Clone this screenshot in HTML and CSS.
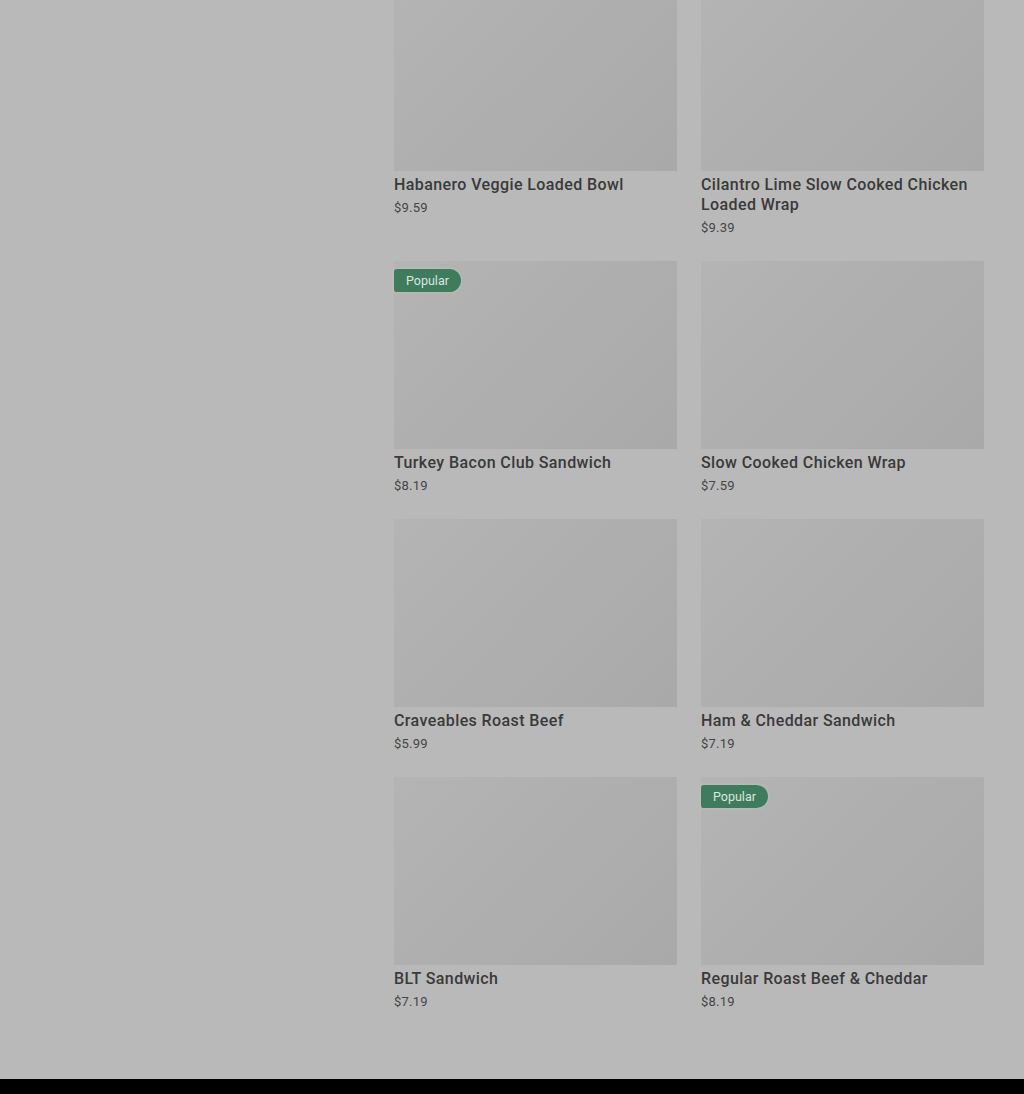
FILE: index.html
```html
<!DOCTYPE html>
<html lang="en">
<head>
    <meta charset="UTF-8">
    <meta name="viewport" content="width=device-width, initial-scale=1.0">
    <title>Menu</title>
    <link rel="stylesheet" href="styles.css">
</head>
<body>

    <div class="page">
        <aside class="sidebar"></aside>

        <main class="menu-grid">
            <div class="item">
                <div class="item-img"></div>
                <h3 class="item-name">Habanero Veggie Loaded Bowl</h3>
                <p class="item-price">$9.59</p>
            </div>
            <div class="item">
                <div class="item-img"></div>
                <h3 class="item-name">Cilantro Lime Slow Cooked Chicken Loaded Wrap</h3>
                <p class="item-price">$9.39</p>
            </div>

            <div class="item">
                <div class="item-img"><span class="badge">Popular</span></div>
                <h3 class="item-name">Turkey Bacon Club Sandwich</h3>
                <p class="item-price">$8.19</p>
            </div>
            <div class="item">
                <div class="item-img"></div>
                <h3 class="item-name">Slow Cooked Chicken Wrap</h3>
                <p class="item-price">$7.59</p>
            </div>

            <div class="item">
                <div class="item-img"></div>
                <h3 class="item-name">Craveables Roast Beef</h3>
                <p class="item-price">$5.99</p>
            </div>
            <div class="item">
                <div class="item-img"></div>
                <h3 class="item-name">Ham &amp; Cheddar Sandwich</h3>
                <p class="item-price">$7.19</p>
            </div>

            <div class="item">
                <div class="item-img"></div>
                <h3 class="item-name">BLT Sandwich</h3>
                <p class="item-price">$7.19</p>
            </div>
            <div class="item">
                <div class="item-img"><span class="badge">Popular</span></div>
                <h3 class="item-name">Regular Roast Beef &amp; Cheddar</h3>
                <p class="item-price">$8.19</p>
            </div>
        </main>
    </div>

    <footer class="footer"></footer>

</body>
</html>
```

FILE: styles.css
```css
body {
    margin: 0;
    font-family: 'Roboto', 'Liberation Sans', sans-serif;
    background: #b9b9b9;
    color: #383838;
}

.page {
    display: flex;
    gap: 24px;
    padding: 0 40px 68px 0;
}

.sidebar {
    width: 370px;
    flex-shrink: 0;
}

.menu-grid {
    flex: 1;
    display: grid;
    grid-template-columns: 1fr 1fr;
    column-gap: 24px;
    row-gap: 24px;
    margin-top: -17px;
    align-items: start;
}

.item-img {
    position: relative;
    height: 188px;
    background: linear-gradient(135deg, #b4b4b4, #a9a9a9);
}

.badge {
    position: absolute;
    top: 8px;
    left: 0;
    padding: 0 12px;
    height: 23px;
    line-height: 23px;
    font-size: 12.5px;
    color: #dbe6df;
    background: #3f7c5d;
    border-radius: 3px 12px 12px 3px;
    box-shadow: 0 0 3px rgba(200, 220, 205, 0.6);
}

.item-name {
    margin: 4px 0 0;
    font-size: 16px;
    font-weight: 500;
    line-height: 20px;
    letter-spacing: 0.4px;
    color: #3a3a3a;
}

.item-price {
    margin: 3px 0 0;
    font-size: 13px;
    line-height: 19px;
    letter-spacing: 0.2px;
    color: #454545;
}

.footer {
    height: 15px;
    background: #000;
}
```
